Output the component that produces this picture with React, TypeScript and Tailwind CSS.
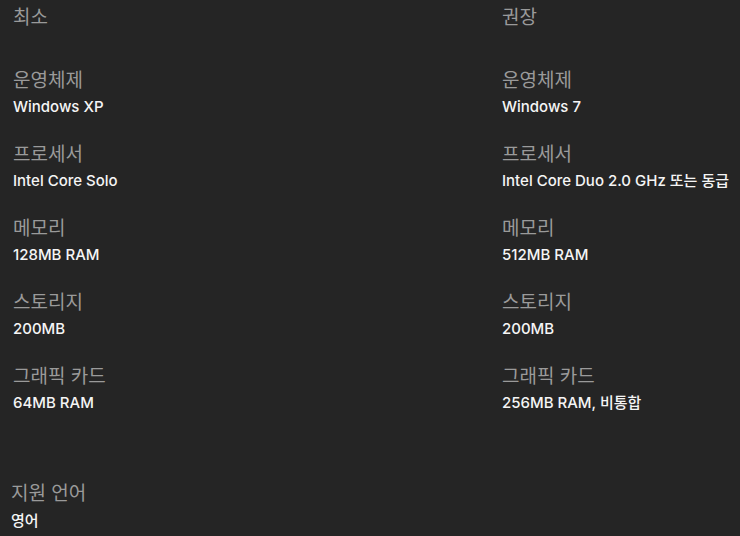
const specs = [
  {
    title: "최소",
    items: [
      ["운영체제", "Windows XP"],
      ["프로세서", "Intel Core Solo"],
      ["메모리", "128MB RAM"],
      ["스토리지", "200MB"],
      ["그래픽 카드", "64MB RAM"],
    ],
  },
  {
    title: "권장",
    items: [
      ["운영체제", "Windows 7"],
      ["프로세서", "Intel Core Duo 2.0 GHz 또는 동급"],
      ["메모리", "512MB RAM"],
      ["스토리지", "200MB"],
      ["그래픽 카드", "256MB RAM, 비통합"],
    ],
  },
];

const font = { fontFamily: "Inter, 'Noto Sans CJK KR', sans-serif" };

export default function App() {
  return (
    <div
      className="h-[536px] w-[740px] overflow-hidden bg-[#252525]"
      style={font}
    >
      <div className="grid grid-cols-[489px_1fr] pl-[13px] pt-[5px]">
        {specs.map((col) => (
          <div key={col.title} className="flex flex-col">
            <h3 className="text-[19px] leading-[26px] text-[#9a9a9a]">
              {col.title}
            </h3>
            <dl className="mt-[37px] flex flex-col gap-[22px]">
              {col.items.map(([label, value]) => (
                <div key={label} className="flex flex-col">
                  <dt className="text-[19px] leading-[26px] text-[#9a9a9a]">
                    {label}
                  </dt>
                  <dd className="text-[15px] font-medium leading-[26px] whitespace-nowrap text-[#f5f5f5]">
                    {value}
                  </dd>
                </div>
              ))}
            </dl>
          </div>
        ))}
      </div>
      <div className="mt-[65px] flex flex-col pl-[11px]">
        <span className="text-[19px] leading-[26px] text-[#9a9a9a]">
          지원 언어
        </span>
        <span className="text-[15px] font-medium leading-[27px] text-[#f5f5f5]">
          영어
        </span>
      </div>
    </div>
  );
}
